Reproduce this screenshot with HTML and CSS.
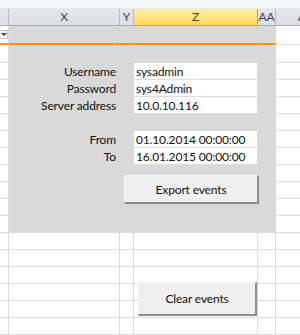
FILE: index.html
```html
<!DOCTYPE html>
<html>
<head>
<meta charset="utf-8">
<link rel="stylesheet" href="styles.css">
</head>
<body>
<div class="app">
  <div class="topstrip"></div>
  <div class="heads">
    <div class="ch"></div>
    <div class="ch">X</div>
    <div class="ch">Y</div>
    <div class="ch sel">Z</div>
    <div class="ch">AA</div>
    <div class="ch">AB</div>
  </div>
  <div class="sheet">
    <!-- row 1 -->
    <div class="c r1 w"><span class="dd"><span class="tri"></span></span></div>
    <div class="c r1 g"></div><div class="c r1 g"></div><div class="c r1 g"></div><div class="c r1 g"></div>
    <div class="c w"></div>
    <!-- row 2 -->
    <div class="c w"></div><div class="c g"></div><div class="c g"></div><div class="c g"></div><div class="c g"></div><div class="c w"></div>
    <!-- form rows -->
    <div class="c w"></div><div class="c g lbl">Username</div><div class="c g"></div><div class="c f">sysadmin</div><div class="c g"></div><div class="c w"></div>
    <div class="c w"></div><div class="c g lbl">Password</div><div class="c g"></div><div class="c f">sys4Admin</div><div class="c g"></div><div class="c w"></div>
    <div class="c w"></div><div class="c g lbl">Server address</div><div class="c g"></div><div class="c f">10.0.10.116</div><div class="c g"></div><div class="c w"></div>
    <div class="c w"></div><div class="c g"></div><div class="c g"></div><div class="c g"></div><div class="c g"></div><div class="c w"></div>
    <div class="c w"></div><div class="c g lbl">From</div><div class="c g"></div><div class="c f">01.10.2014 00:00:00</div><div class="c g"></div><div class="c w"></div>
    <div class="c w"></div><div class="c g lbl">To</div><div class="c g"></div><div class="c f">16.01.2015 00:00:00</div><div class="c g"></div><div class="c w"></div>
    <div class="c w"></div><div class="c g"></div><div class="c g"></div><div class="c g"></div><div class="c g"></div><div class="c w"></div>
    <div class="c w"></div><div class="c g"></div><div class="c g"></div><div class="c g"></div><div class="c g"></div><div class="c w"></div>
    <div class="c w"></div><div class="c g"></div><div class="c g"></div><div class="c g"></div><div class="c g"></div><div class="c w"></div>
    <div class="c w"></div><div class="c g"></div><div class="c g"></div><div class="c g"></div><div class="c g"></div><div class="c w"></div>
    <!-- white rows -->
    <div class="c w"></div><div class="c w"></div><div class="c w"></div><div class="c w"></div><div class="c w"></div><div class="c w"></div>
    <div class="c w"></div><div class="c w"></div><div class="c w"></div><div class="c w"></div><div class="c w"></div><div class="c w"></div>
    <div class="c w"></div><div class="c w"></div><div class="c w"></div><div class="c w"></div><div class="c w"></div><div class="c w"></div>
    <div class="c w"></div><div class="c w"></div><div class="c w"></div><div class="c w"></div><div class="c w"></div><div class="c w"></div>
    <div class="c w"></div><div class="c w"></div><div class="c w"></div><div class="c w"></div><div class="c w"></div><div class="c w"></div>
    <div class="c w"></div><div class="c w"></div><div class="c w"></div><div class="c w"></div><div class="c w"></div><div class="c w"></div>
  </div>
  <button class="btn btn-export">Export events</button>
  <button class="btn btn-clear">Clear events</button>
</div>
</body>
</html>
```
FILE: styles.css
```css
html, body {
  margin: 0;
  padding: 0;
  background: #ffffff;
  overflow: hidden;
}
.app {
  position: relative;
  width: 300px;
  height: 335px;
  overflow: hidden;
  font-family: "Lato", "Liberation Sans", sans-serif;
  font-size: 12px;
  letter-spacing: -0.15px;
  color: #111;
}
.topstrip {
  height: 8px;
  background: #f5f6f8;
  border-bottom: 1px solid #e6e9ed;
}
.heads {
  display: grid;
  grid-template-columns: 9px 111px 14px 124px 18px 60px;
  height: 17px;
}
.ch {
  box-sizing: border-box;
  background: linear-gradient(#e4e7eb, #dcdfe4);
  border-right: 1px solid #b3b9c1;
  border-bottom: 1px solid #a8afb8;
  color: #3b4452;
  text-align: center;
  line-height: 16px;
  font-size: 12px;
}
.ch.sel {
  background: linear-gradient(#fff0a8, #ffd95e);
  border-right: 1px solid #c6a84d;
  border-bottom: 1px solid #e0a92e;
  color: #4a4226;
}
.sheet {
  display: grid;
  grid-template-columns: 9px 111px 14px 124px 18px 60px;
  grid-template-rows: 19px 18px repeat(20, 17px);
}
.c {
  box-sizing: border-box;
  border-right: 1px solid #dadcdd;
  border-bottom: 1px solid #dadcdd;
  white-space: nowrap;
  display: flex;
  align-items: flex-end;
  line-height: 15px;
}
.w { background: #ffffff; }
.g {
  background: #d9d9d9;
  border-color: #d9d9d9;
}
.r1 {
  border-bottom: 2px solid #f7941e;
}
.lbl {
  justify-content: flex-end;
  padding-right: 3px;
}
.f {
  background: #ffffff;
  border-right-color: #d9d9d9;
  border-bottom-color: #dcdcdc;
  padding-left: 2px;
}
.dd {
  position: relative;
  display: block;
  box-sizing: border-box;
  width: 8px;
  height: 9px;
  margin-bottom: 4px;
  background: #f4f4f4;
  border: 1px solid #c7c7c7;
  border-left: none;
}
.tri {
  position: absolute;
  left: 1px;
  top: 2px;
  width: 0;
  height: 0;
  border-left: 3px solid transparent;
  border-right: 3px solid transparent;
  border-top: 3px solid #444;
}
.btn {
  position: absolute;
  box-sizing: border-box;
  background: #efefef;
  border: none;
  border-top: 1px solid #f7f7f7;
  border-left: 1px solid #f7f7f7;
  border-right: 2px solid #8c8c8c;
  border-bottom: 2px solid #8c8c8c;
  font-family: "Lato", "Liberation Sans", sans-serif;
  font-size: 12px;
  letter-spacing: -0.15px;
  color: #111;
  padding: 0;
  margin: 0;
}
.btn-export {
  left: 124px;
  top: 175px;
  width: 135px;
  height: 29px;
}
.btn-clear {
  left: 138px;
  top: 282px;
  width: 119px;
  height: 34px;
}
```
